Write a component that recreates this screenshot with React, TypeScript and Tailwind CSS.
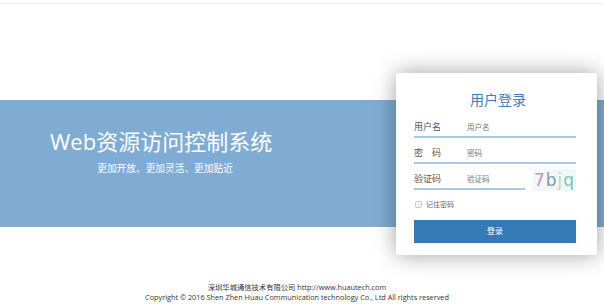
import React from "react";

const cjk = { fontFamily: '"Open Sans", "Noto Sans CJK SC", sans-serif' };

export default function App() {
  return (
    <div className="w-[604px] h-[304px] bg-white overflow-hidden flex flex-col" style={cjk}>
      <div className="h-[1px] mt-[3px] bg-[#f0f0f0]" />
      <div className="h-[96px]" />
      <div className="h-[127px] bg-[#80acd4] flex items-center justify-between">
        <div className="self-start pt-[28px] pl-[50px] flex flex-col items-center">
          <div className="text-[22px] leading-[26px] text-white font-normal">Web资源访问控制系统</div>
          <div className="text-[9.7px] leading-[14px] text-white mt-[8px] ml-[8px]">更加开放、更加灵活、更加贴近</div>
        </div>
        <div className="w-[201px] h-[182px] shrink-0 mr-[7px] bg-white rounded-[3px] shadow-[0_0_22px_rgba(0,0,0,0.38)] px-[18px] pt-[17px] flex flex-col">
          <div className="text-center text-[14px] leading-[20px] text-[#3b7dc1] ml-[3px]">用户登录</div>
          <div className="h-[2px]" />
          <div className="h-[26px] flex items-end pb-[3px] border-b-2 border-[#abc9e4] w-[162px]">
            <span className="w-[53px] text-[9px] leading-[12px] text-[#555]">用户名</span>
            <span className="text-[7.5px] leading-[12px] text-[#777]">用户名</span>
          </div>
          <div className="h-[26px] flex items-end pb-[3px] border-b-2 border-[#abc9e4] w-[162px]">
            <span className="w-[53px] text-[9px] leading-[12px] text-[#555] whitespace-pre">{"密　码"}</span>
            <span className="text-[7.5px] leading-[12px] text-[#777]">密码</span>
          </div>
          <div className="flex items-end justify-between w-[162px]">
            <div className="h-[26px] w-[111px] flex items-end pb-[3px] border-b-2 border-[#abc9e4]">
              <span className="w-[53px] text-[9px] leading-[12px] text-[#555]">验证码</span>
              <span className="text-[7.5px] leading-[12px] text-[#777]">验证码</span>
            </div>
            <div
              className="w-[43px] h-[22px] bg-[#f1f8fa] flex items-center justify-center text-[17px] leading-[22px] tracking-[1px] mb-[-1px]"
              style={{ fontFamily: '"DejaVu Sans", sans-serif' }}
            >
              <span className="text-[#cc8fb5]">7</span>
              <span className="text-[#7f9ba9]">b</span>
              <span className="text-[#ccd6a2]">j</span>
              <span className="text-[#7cc3bb]">q</span>
            </div>
          </div>
          <div className="flex items-center mt-[10px] h-[10px]">
            <span className="w-[7px] h-[7px] rounded-[1.5px] border border-[#c8c8c8] bg-[#f4f4f4] ml-[1px]" />
            <span className="ml-[4px] text-[7px] leading-[10px] text-[#666]">记住密码</span>
          </div>
          <div className="mt-[10px] h-[23px] w-[162px] bg-[#337ab7] flex items-center justify-center text-white text-[8px] leading-[10px]">
            登录
          </div>
        </div>
      </div>
      <div className="mt-[55px] flex flex-col items-center text-[#333] text-[7.3px] leading-[10px] pr-[10px]">
        <div>深圳华城通信技术有限公司 http://www.huautech.com</div>
        <div>Copyright © 2016 Shen Zhen Huau Communication technology Co., Ltd All rights reserved</div>
      </div>
    </div>
  );
}
